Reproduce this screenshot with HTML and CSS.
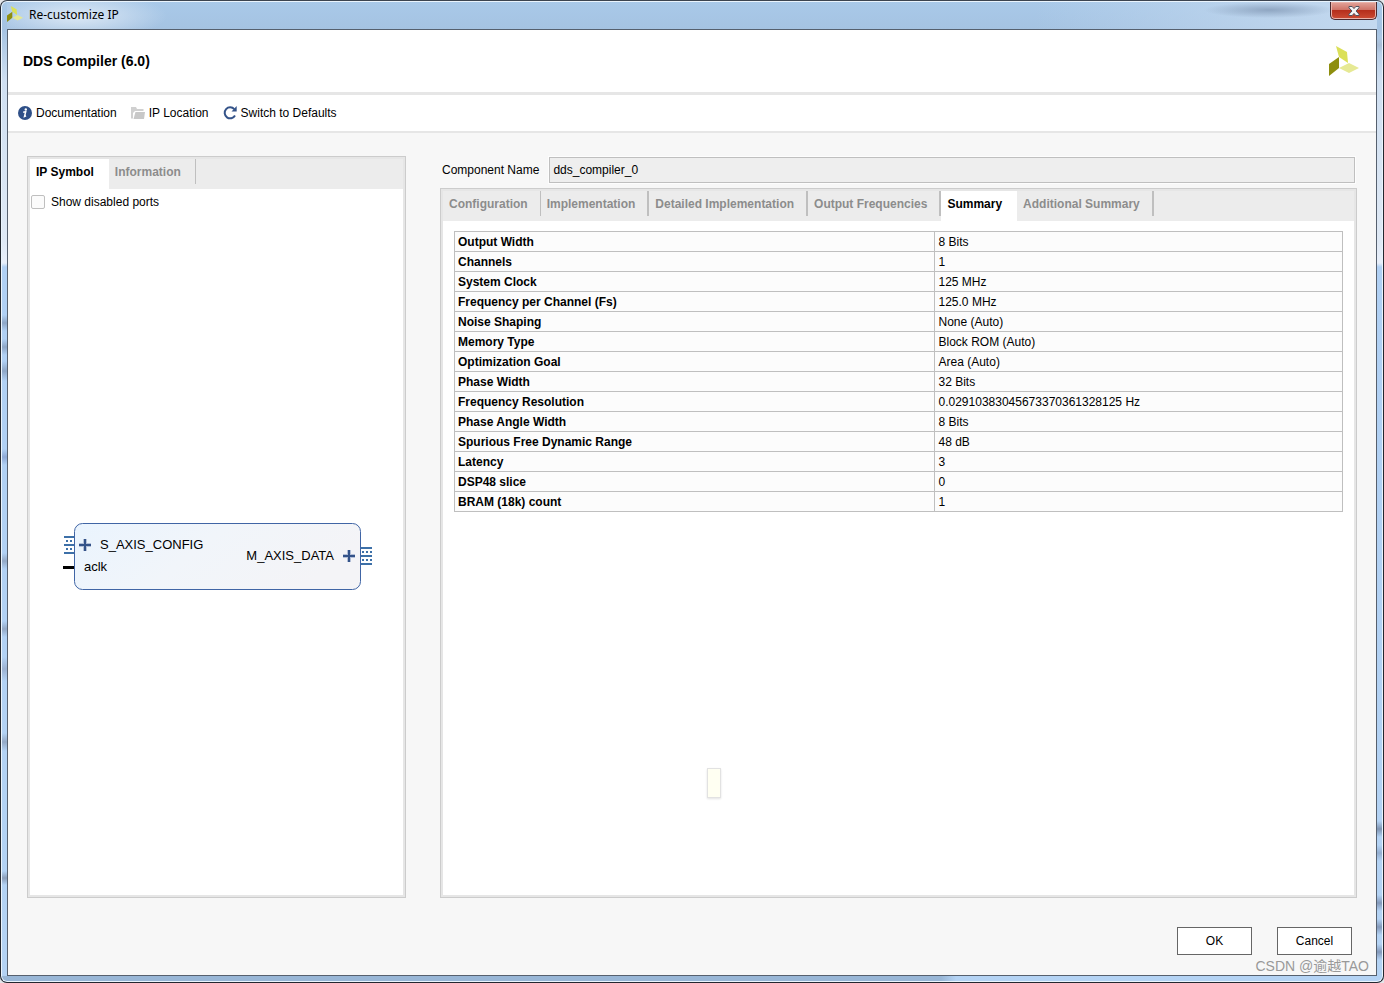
FILE: index.html
```html
<!DOCTYPE html>
<html lang="en">
<head>
<meta charset="utf-8">
<title>Re-customize IP</title>
<link rel="stylesheet" href="styles.css">
</head>
<body>
<div class="window">
  <header class="titlebar">
    <svg class="titlebar-logo" width="16" height="16" viewBox="0 0 30 30" aria-hidden="true">
      <path fill="#dbe058" d="M7 0l11 6 1 11-9-6z"/><path fill="#8e8e0e" d="M0 18l10-7v11L0 30z"/><path fill="#e6e994" d="M10 22l10-5 10 5-10 5z"/>
    </svg>
    <span class="titlebar-text">Re-customize IP</span>
    <button class="close" type="button" aria-label="Close">
      <svg width="12" height="10" viewBox="0 0 12 10" aria-hidden="true"><path d="M1 .5h3.2L6 2.6 7.800 .5H11v1.300L8 5l3 3.200v1.300H7.800L6 7.400 4.200 9.500H1V8.200L4 5 1 1.800z" fill="#f4f4f4" stroke="#50525f"/></svg>
    </button>
  </header>
  <main class="client">
    <div class="heading">
      <h1>DDS Compiler (6.0)</h1>
      <svg width="30" height="30" viewBox="0 0 30 30" aria-hidden="true">
        <path fill="#dbe058" d="M7 0l11 6 1 11-9-6z"/><path fill="#8e8e0e" d="M0 18l10-7v11L0 30z"/><path fill="#e6e994" d="M10 22l10-5 10 5-10 5z"/>
      </svg>
    </div>
    <nav class="toolbar">
      <button type="button"><svg width="14" height="14" viewBox="0 0 14 14" aria-hidden="true"><circle cx="7" cy="7" r="7" fill="#2f5088"/><circle cx="7.800" cy="3.500" r="1.200" fill="#fff"/><path d="M5.200 6.200L7.700 5.700 6.500 10.500l1.600-.6" fill="none" stroke="#fff" stroke-width="1.500"/></svg>Documentation</button>
      <button type="button"><svg width="14" height="12" viewBox="0 0 14 12" aria-hidden="true"><path d="M0 0h5l1 2h6.500v2H4L2 6v5.500H0z" fill="#d0d0d0"/><path d="M4.500 5H14l-1 7H2.500z" fill="#c8c8c8"/></svg>IP Location</button>
      <button type="button"><svg width="14" height="14" viewBox="0 0 14 14" aria-hidden="true"><path d="M11.300 3.200A5.500 5.500 0 1 0 12 9.500" fill="none" stroke="#345389" stroke-width="2"/><path d="M13.700 0v5.500H8.500z" fill="#345389"/></svg>Switch to Defaults</button>
    </nav>
    <div class="content">
      <section class="panel symbol-panel">
        <div class="tabs" role="tablist">
          <button class="tab active" type="button" role="tab">IP Symbol</button>
          <button class="tab" type="button" role="tab">Information</button>
        </div>
        <label class="check"><input type="checkbox">Show disabled ports</label>
        <div class="diagram">
          <svg width="309" height="67" viewBox="0 0 309 67">
            <defs><linearGradient id="fill" x1="0" y1="0" x2="1" y2="0.300"><stop offset="0" stop-color="#eaf4fe"/><stop offset="0.500" stop-color="#f1f5fa"/><stop offset="1" stop-color="#f4f4f7"/></linearGradient></defs>
            <path d="M1 14h11M1 22h11M1 30h11M298 25h11M298 33h11M298 41h11" stroke="#3d70a8" stroke-width="2"/>
            <path d="M3 18h9M3 26h9M299 29h10M299 37h10" stroke="#3d70a8" stroke-width="2" stroke-dasharray="2 2"/>
            <path d="M0 44.500h12" stroke="#000" stroke-width="3"/>
            <rect x="11.500" y=".5" width="286" height="66" rx="8" fill="url(#fill)" stroke="#4065a5"/>
            <path d="M16 22h12M22 16v12M280 33h12M286 27v12" stroke="#b4c0d8" stroke-width="4"/>
            <path d="M16 22h12M22 16v12M280 33h12M286 27v12" stroke="#345389" stroke-width="2"/>
            <text x="37" y="26">S_AXIS_CONFIG</text>
            <text x="21" y="48">aclk</text>
            <text x="271" y="37" text-anchor="end">M_AXIS_DATA</text>
          </svg>
        </div>
      </section>
      <section class="settings">
        <div class="name-row">
          <label for="component">Component Name</label>
          <input id="component" type="text" value="dds_compiler_0" readonly>
        </div>
        <div class="panel">
          <div class="tabs" role="tablist">
            <button class="tab" type="button" role="tab">Configuration</button>
            <button class="tab wide" type="button" role="tab">Implementation</button>
            <button class="tab wide" type="button" role="tab">Detailed Implementation</button>
            <button class="tab wide" type="button" role="tab">Output Frequencies</button>
            <button class="tab active" type="button" role="tab">Summary</button>
            <button class="tab wide" type="button" role="tab">Additional Summary</button>
          </div>
          <table class="summary">
            <tbody>
              <tr><th scope="row">Output Width</th><td>8 Bits</td></tr>
              <tr><th scope="row">Channels</th><td>1</td></tr>
              <tr><th scope="row">System Clock</th><td>125 MHz</td></tr>
              <tr><th scope="row">Frequency per Channel (Fs)</th><td>125.0 MHz</td></tr>
              <tr><th scope="row">Noise Shaping</th><td>None (Auto)</td></tr>
              <tr><th scope="row">Memory Type</th><td>Block ROM (Auto)</td></tr>
              <tr><th scope="row">Optimization Goal</th><td>Area (Auto)</td></tr>
              <tr><th scope="row">Phase Width</th><td>32 Bits</td></tr>
              <tr><th scope="row">Frequency Resolution</th><td>0.02910383045673370361328125 Hz</td></tr>
              <tr><th scope="row">Phase Angle Width</th><td>8 Bits</td></tr>
              <tr><th scope="row">Spurious Free Dynamic Range</th><td>48 dB</td></tr>
              <tr><th scope="row">Latency</th><td>3</td></tr>
              <tr><th scope="row">DSP48 slice</th><td>0</td></tr>
              <tr><th scope="row">BRAM (18k) count</th><td>1</td></tr>
            </tbody>
          </table>
        </div>
      </section>
    </div>
    <footer class="actions">
      <button type="button">OK</button>
      <button type="button">Cancel</button>
    </footer>
  </main>
  <div class="hint"></div>
  <span class="watermark">CSDN @逾越TAO</span>
</div>
</body>
</html>
```
FILE: styles.css
```css
* { box-sizing: border-box; }
body {
  margin: 0;
  background: #e4e6ea;
  color: #000;
  font: 12px/16px "Liberation Sans", Arial, sans-serif;
}
button, input { font: inherit; color: inherit; }
button { padding: 0; border: 0; background: none; }
svg { flex: none; }

.window {
  position: relative;
  display: flex;
  flex-direction: column;
  min-height: 100vh;
  padding: 0 6px 6px;
  border: 1px solid #23272f;
  border-top-color: #3c4450;
  border-radius: 7px;
  box-shadow: inset 0 0 0 1px #eaf4fd;
  background:
    linear-gradient(transparent 314px, #8ea6c6 322px, transparent 330px, transparent 338px, #8ea6c6 346px, transparent 354px, transparent 360px, #8ea6c6 370px, transparent 380px, transparent 448px, #8ea9d6 456px, transparent 464px, transparent 552px, #94a9c6 560px, transparent 568px, transparent 620px, #94a9c6 628px, transparent 636px, transparent 656px, #9cb2d2 668px, transparent 680px, transparent 732px, #94a9c6 741px, transparent 750px, transparent 870px, #8c9fba 877px, transparent 884px) left / 7px 100% no-repeat,
    linear-gradient(transparent 36px, #a8bdd6 44px, transparent 52px, transparent 820px, #7f94b2 828px, transparent 836px, transparent 844px, #94aed0 852px, transparent 860px, transparent 894px, #8499ba 902px, transparent 910px, transparent 918px, #8499ba 926px, transparent 934px, transparent 943px, #8499ba 951px, transparent 959px) right / 7px 100% no-repeat,
    linear-gradient(90deg, #98b6d6 940px, transparent 955px) bottom / 100% 6px no-repeat,
    linear-gradient(#a9c9e9 0, #a5c3e2 28px, #cfdff1 80px, #dfe9f5 240px, #e8effa 262px, #b0d0f4 266px, #b4d3f4 100%);
}
.titlebar {
  display: flex;
  align-items: flex-start;
  height: 27px;
  margin-top: 1px;
  background:
    radial-gradient(ellipse 65px 8px at 1262px 8px, #8fa6c2, transparent),
    radial-gradient(ellipse 90px 24px at 70px 14px, #dce8f5, transparent),
    linear-gradient(90deg, transparent 75%, #c4d9ef);
}
.titlebar-logo { margin-top: 4px; }
.titlebar-text {
  flex: 1;
  padding: 5px 6px;
  font-family: "Noto Sans", sans-serif;
}
.close {
  display: grid;
  place-items: center;
  width: 47px;
  height: 18px;
  border: 1px solid #4a2a30;
  border-top: 0;
  border-radius: 0 0 5px 5px;
  background: linear-gradient(#e3a59c, #cf7468 45%, #b52f1c 50%, #cc4c34);
  box-shadow: inset 0 0 0 1px #e9b3aa;
}

.client {
  flex: 1;
  display: flex;
  flex-direction: column;
  border: 1px solid #56606e;
  background: #f7f7f7;
}
.heading {
  display: flex;
  align-items: center;
  justify-content: space-between;
  height: 65px;
  padding: 0 17px 0 15px;
  border-bottom: 3px solid #e6e6e6;
  background: #fff;
}
.heading h1 { margin: 0; font-size: 14px; line-height: 16px; }
.toolbar {
  display: flex;
  align-items: center;
  gap: 14px;
  height: 38px;
  padding: 0 10px;
  border-bottom: 2px solid #e6e6e6;
  background: #fff;
}
.toolbar button { display: flex; align-items: center; gap: 4px; }

.content {
  flex: 1;
  display: grid;
  grid-template-columns: 379px 1fr;
  gap: 34px;
  padding: 23px 19px 0;
}
.panel {
  border: 1px solid #ccc;
  box-shadow: inset 0 0 0 2px #e6e6e6;
  padding: 2px;
  background: #fff;
}
.symbol-panel { display: flex; flex-direction: column; }
.tabs { display: flex; height: 30px; background: #ececec; }
.tab {
  height: 25px;
  padding: 0 12px 0 6px;
  border-right: 1px solid #bfbfbf;
  color: #8c8c8c;
  font-weight: bold;
  line-height: 27px;
}
.tab.wide { border-right-width: 2px; }
.tab.active {
  height: 30px;
  padding-right: 14px;
  padding-bottom: 3px;
  border-right-color: #fff;
  background: #fff;
  color: #000;
}
.symbol-panel .tab { padding-right: 14px; }
.check { display: flex; align-items: center; gap: 6px; padding: 5px 1px; }
.check input {
  appearance: none;
  width: 14px;
  height: 14px;
  margin: 0;
  border: 1px solid #bfbfbf;
  border-radius: 2px;
  background: #fbfbfb;
}
.diagram { flex: 1; display: grid; place-items: center; padding: 2px 0 0 2px; }
.diagram text { font-size: 13px; }

.settings { display: flex; flex-direction: column; gap: 5px; }
.settings .panel { flex: 1; }
.name-row { display: flex; align-items: center; gap: 10px; padding: 1px 2px 0; }
.name-row input {
  flex: 1;
  height: 26px;
  padding: 0 3px;
  border: 1px solid #bfbfbf;
  border-radius: 0;
  outline: 1px solid #fdfdfd;
  background: #eee;
}
.summary {
  width: calc(100% - 22px);
  margin: 10px 11px;
  border-collapse: collapse;
  table-layout: fixed;
  background: #fcfcfc;
}
.summary th, .summary td {
  height: 20px;
  padding: 1px 4px 0;
  border: 1px solid #bfbfbf;
  text-align: left;
}
.summary th { width: 54%; padding-left: 3px; }

.actions { display: flex; justify-content: flex-end; gap: 25px; padding: 29px 24px 20px; }
.actions button {
  width: 75px;
  height: 28px;
  border: 1px solid #666;
  background: #fff;
}

.hint {
  position: absolute;
  left: 706px;
  top: 767px;
  width: 14px;
  height: 30px;
  border: 1px solid #e2e2e2;
  background: #fffff2;
  box-shadow: 0 1px 2px #e4e4e4;
}
.watermark {
  position: absolute;
  right: 14px;
  bottom: 6px;
  color: #999;
  font: 14px/20px "Liberation Sans", "Noto Sans CJK SC", sans-serif;
}
```
